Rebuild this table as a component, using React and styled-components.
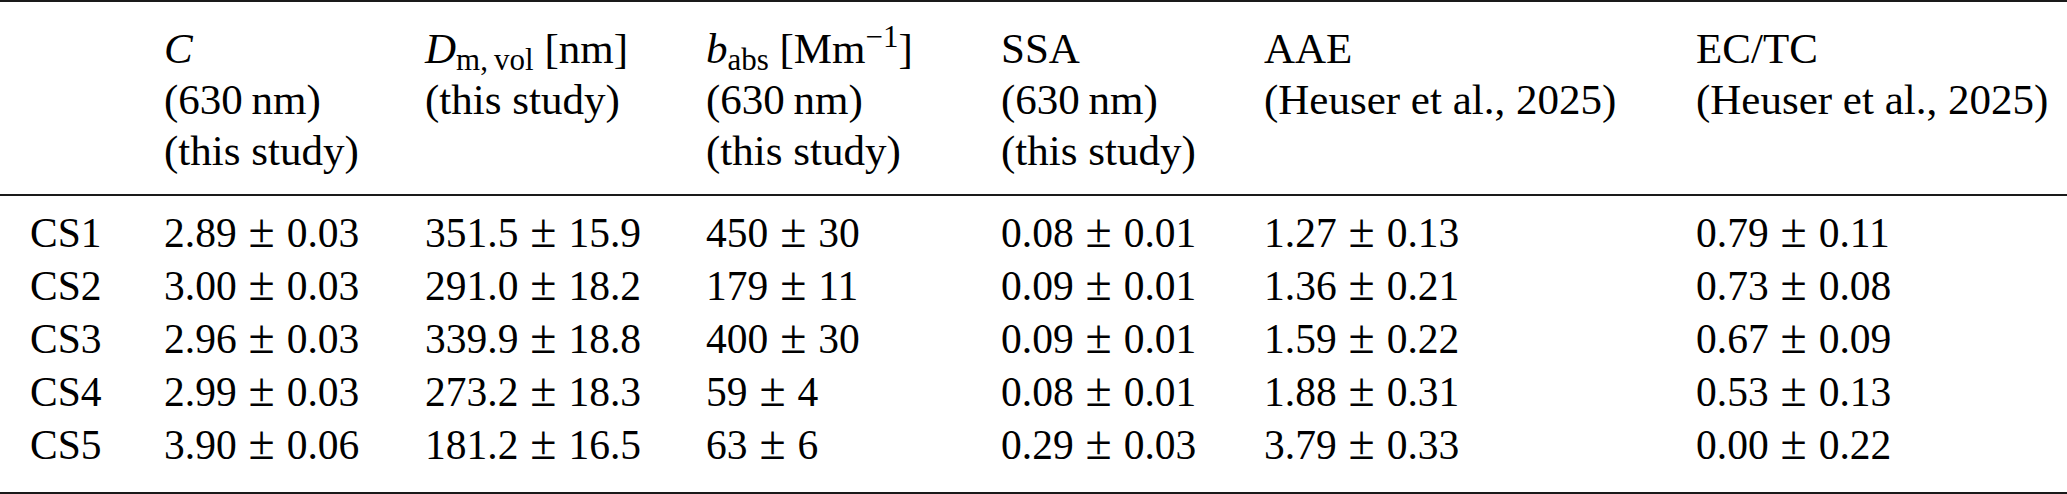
import React from 'react';
import styled, { createGlobalStyle } from 'styled-components';

// page defaults
const GlobalStyle = createGlobalStyle`
  html, body {
    margin: 0;
    padding: 0;
    background: #fff;
  }
  body {
    font-family: "Liberation Serif", "Times New Roman", serif;
    color: #000;
  }
`;

const Table = styled.div`
  width: 2067px;
  height: 494px;
  box-sizing: border-box;
  border-top: 2px solid #1a1a1a;
  border-bottom: 2px solid #1a1a1a;
`;

const Grid = styled.div`
  display: grid;
  grid-template-columns: 134px 261px 281px 295px 263px 432px 1fr;
  padding-left: 30px;
  white-space: nowrap;
`;

const Header = styled(Grid)`
  padding-top: 21px;
  padding-bottom: 18px;
  font-size: 43px;
  line-height: 51px;
  border-bottom: 2px solid #1a1a1a;
`;

const Body = styled.div`
  padding: 10.5px 0 20.5px;
`;

const Row = styled(Grid)`
  font-size: 41.5px;
  line-height: 53px;
`;

const Cell = styled.div`
  display: flex;
  flex-direction: column;
`;

const Italic = styled.span`
  font-style: italic;
`;

const Sub = styled.span`
  font-size: 0.72em;
  line-height: 0;
  vertical-align: -0.24em;
`;

const Sup = styled.span`
  font-size: 0.72em;
  line-height: 0;
  vertical-align: 0.52em;
`;

// the plus-minus sign of the math font is wider than the text one
const Pm = styled.span`
  font-size: 1.15em;
  line-height: 0;
  margin: 0 0.25em;
`;

const Value = ({ v, e }) => (
  <span>{v}<Pm>±</Pm>{e}</span>
);

const rows = [
  ['CS1', ['2.89', '0.03'], ['351.5', '15.9'], ['450', '30'], ['0.08', '0.01'], ['1.27', '0.13'], ['0.79', '0.11']],
  ['CS2', ['3.00', '0.03'], ['291.0', '18.2'], ['179', '11'], ['0.09', '0.01'], ['1.36', '0.21'], ['0.73', '0.08']],
  ['CS3', ['2.96', '0.03'], ['339.9', '18.8'], ['400', '30'], ['0.09', '0.01'], ['1.59', '0.22'], ['0.67', '0.09']],
  ['CS4', ['2.99', '0.03'], ['273.2', '18.3'], ['59', '4'], ['0.08', '0.01'], ['1.88', '0.31'], ['0.53', '0.13']],
  ['CS5', ['3.90', '0.06'], ['181.2', '16.5'], ['63', '6'], ['0.29', '0.03'], ['3.79', '0.33'], ['0.00', '0.22']],
];

const App = () => {
  return (
    <>
      <GlobalStyle />
      <Table>
        <Header>
          <Cell />
          <Cell>
            <span><Italic>C</Italic></span>
            <span>(630{'\u2009'}nm)</span>
            <span>(this study)</span>
          </Cell>
          <Cell>
            <span><Italic>D</Italic><Sub>m,{'\u2009'}vol</Sub> [nm]</span>
            <span>(this study)</span>
          </Cell>
          <Cell>
            <span><Italic>b</Italic><Sub>abs</Sub> [Mm<Sup>−1</Sup>]</span>
            <span>(630{'\u2009'}nm)</span>
            <span>(this study)</span>
          </Cell>
          <Cell>
            <span>SSA</span>
            <span>(630{'\u2009'}nm)</span>
            <span>(this study)</span>
          </Cell>
          <Cell>
            <span>AAE</span>
            <span>(Heuser et al., 2025)</span>
          </Cell>
          <Cell>
            <span>EC/TC</span>
            <span>(Heuser et al., 2025)</span>
          </Cell>
        </Header>
        <Body>
          {rows.map(([name, ...vals]) => (
            <Row key={name}>
              <span>{name}</span>
              {vals.map(([v, e], i) => (
                <Value key={i} v={v} e={e} />
              ))}
            </Row>
          ))}
        </Body>
      </Table>
    </>
  );
};

export default App;
